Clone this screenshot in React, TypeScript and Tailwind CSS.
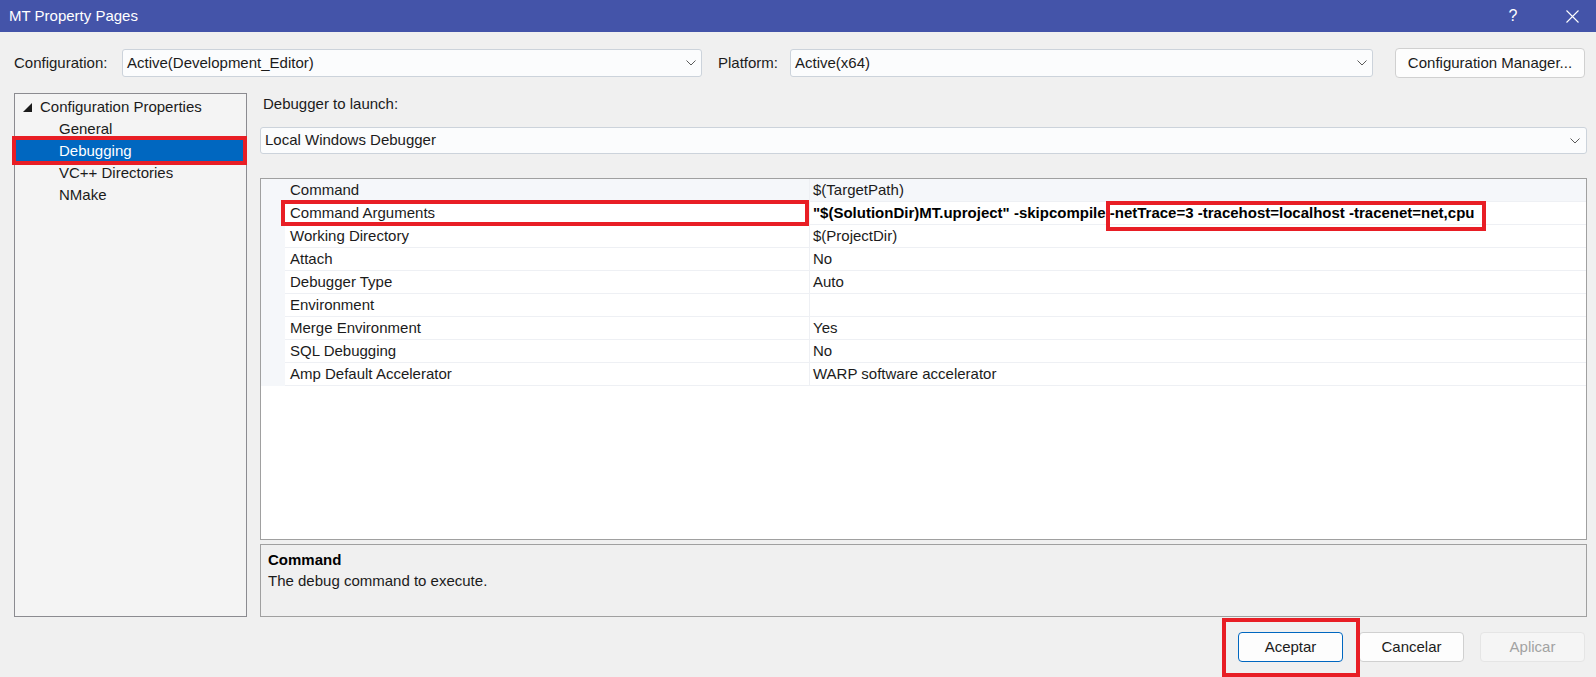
import type { ReactNode } from 'react';

const rows = [
  { name: 'Command', value: '$(TargetPath)' },
  { name: 'Command Arguments', value: '', args: true },
  { name: 'Working Directory', value: '$(ProjectDir)' },
  { name: 'Attach', value: 'No' },
  { name: 'Debugger Type', value: 'Auto' },
  { name: 'Environment', value: '' },
  { name: 'Merge Environment', value: 'Yes' },
  { name: 'SQL Debugging', value: 'No' },
  { name: 'Amp Default Accelerator', value: 'WARP software accelerator' },
];

function Chevron() {
  return (
    <svg width="10" height="6" viewBox="0 0 10 6" className="shrink-0">
      <polyline points="0.5,0.5 5,5 9.5,0.5" fill="none" stroke="#5a5a5a" strokeWidth="1" />
    </svg>
  );
}

function Select({ value, className }: { value: string; className: string }) {
  return (
    <div
      className={`flex items-center justify-between rounded-[3px] border border-[#ccd3db] bg-[#fbfcfd] pl-[4px] pr-[5px] ${className}`}
    >
      <span>{value}</span>
      <Chevron />
    </div>
  );
}

// red annotation frame drawn over the screenshot content
function RedBox({ className }: { className: string }) {
  return <span aria-hidden className={`pointer-events-none absolute border-[4px] border-[#e81e25] ${className}`} />;
}

function TreeItem({ children, selected }: { children: ReactNode; selected?: boolean }) {
  if (selected) {
    return (
      <div className="relative ml-[1px] mr-[3px] flex h-[22px] items-center bg-[#0067c0] pl-[43px] text-white">
        {children}
        <RedBox className="-bottom-[3px] -left-[4px] -right-[4px] -top-[4px]" />
      </div>
    );
  }
  return <div className="flex h-[22px] items-center pl-[44px]">{children}</div>;
}

export default function App() {
  return (
    <div className="flex h-[677px] w-[1596px] flex-col overflow-hidden bg-[#f0f0f0] font-['Liberation_Sans',Arial,sans-serif] text-[15px] text-[#1b1b1b]">
      {/* title bar */}
      <div className="flex h-[32px] shrink-0 items-center bg-[#4454a9] pr-[1px] text-white">
        <span className="pl-[9px]">MT Property Pages</span>
        <div className="ml-auto flex h-full">
          <div className="mr-[13px] flex w-[46px] items-center justify-center text-[16px] font-light">?</div>
          <div className="flex w-[46px] items-center justify-center">
            <svg width="13" height="13" viewBox="0 0 13 13">
              <path d="M0.5 0.5 L12.5 12.5 M12.5 0.5 L0.5 12.5" stroke="#ffffff" strokeWidth="1.1" />
            </svg>
          </div>
        </div>
      </div>

      {/* configuration row */}
      <div className="mt-[17px] flex h-[28px] shrink-0 items-center pl-[14px]">
        <span className="w-[108px]">Configuration:</span>
        <Select value="Active(Development_Editor)" className="h-[28px] w-[580px]" />
        <span className="ml-[16px] w-[72px]">Platform:</span>
        <Select value="Active(x64)" className="h-[28px] w-[583px]" />
        <button className="ml-[22px] h-[30px] w-[190px] rounded-[4px] border border-[#d0d0d0] bg-[#fdfdfd] text-[#1b1b1b]">
          Configuration Manager...
        </button>
      </div>

      {/* body */}
      <div className="mt-[16px] flex h-[524px] shrink-0 gap-[13px] pl-[14px] pr-[9px]">
        <div className="w-[233px] shrink-0 border border-[#8b8b90] bg-[#f4f4f4] pt-[2px]">
          <div className="flex h-[22px] items-center pl-[8px]">
            <svg width="9" height="9" viewBox="0 0 9 9" className="shrink-0">
              <polygon points="9,0 9,9 0,9" fill="#1b1b1b" />
            </svg>
            <span className="ml-[8px]">Configuration Properties</span>
          </div>
          <TreeItem>General</TreeItem>
          <TreeItem selected>Debugging</TreeItem>
          <TreeItem>VC++ Directories</TreeItem>
          <TreeItem>NMake</TreeItem>
        </div>

        <div className="flex min-w-0 flex-1 flex-col">
          <div className="flex h-[22px] items-center pl-[3px]">Debugger to launch:</div>
          <Select value="Local Windows Debugger" className="mt-[12px] h-[27px] pl-[3px] pr-[6px]" />

          <div className="mt-[24px] h-[362px] border border-[#a0a0a0] bg-white">
            {rows.map((r, i) => (
              <div key={r.name} className={`flex h-[23px] ${i === 0 ? 'bg-[#f5f7fa]' : ''}`}>
                <div className="w-[24px] shrink-0 bg-[#f5f7fa]" />
                <div className="relative flex w-[524px] shrink-0 items-center border-b border-[#eef0f4] pl-[5px]">
                  {r.name}
                  {r.args && <RedBox className="-bottom-[2px] -left-[4px] right-0 -top-[2px]" />}
                </div>
                <div className="flex flex-1 items-center border-b border-l border-[#eef0f4] pl-[3px]">
                  {r.args ? (
                    <span className="whitespace-pre font-bold text-black">
                      "$(SolutionDir)MT.uproject" -skipcompile{' '}
                      <span className="relative">
                        -netTrace=3 -tracehost=localhost -tracenet=net,cpu
                        <RedBox className="-bottom-[10px] -left-[4px] -right-[12px] -top-[3px]" />
                      </span>
                    </span>
                  ) : (
                    r.value
                  )}
                </div>
              </div>
            ))}
          </div>

          <div className="mt-[4px] h-[73px] border border-[#a0a0a0] bg-[#f0f0f0] px-[7px] pt-[4px] leading-[21px]">
            <div className="font-bold text-black">Command</div>
            <div>The debug command to execute.</div>
          </div>
        </div>
      </div>

      {/* footer buttons */}
      <div className="flex flex-1 justify-end gap-[16px] pr-[11px] pt-[15px]">
        <div className="relative h-[30px]">
          <button className="h-[30px] w-[105px] rounded-[4px] border border-[#0067c0] bg-[#fdfdfd] text-[#1b1b1b]">
            Aceptar
          </button>
          <RedBox className="-bottom-[15px] -left-[16px] -right-[17px] -top-[14px]" />
        </div>
        <button className="h-[30px] w-[105px] rounded-[4px] border border-[#d0d0d0] bg-[#fdfdfd] text-[#1b1b1b]">
          Cancelar
        </button>
        <button className="h-[30px] w-[105px] rounded-[4px] border border-[#e5e5e5] bg-[#f5f5f5] text-[#a2a2a2]">
          Aplicar
        </button>
      </div>
    </div>
  );
}
